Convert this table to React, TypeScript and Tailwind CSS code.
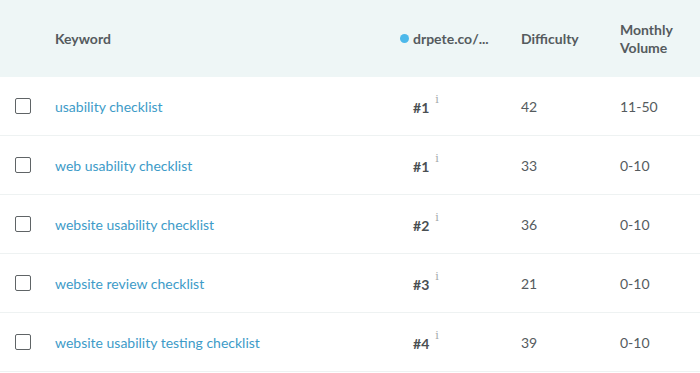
import React from 'react';

type Row = {
  keyword: string;
  rank: number;
  difficulty: number;
  volume: string;
};

const rows: Row[] = [
  { keyword: 'usability checklist', rank: 1, difficulty: 42, volume: '11-50' },
  { keyword: 'web usability checklist', rank: 1, difficulty: 33, volume: '0-10' },
  { keyword: 'website usability checklist', rank: 2, difficulty: 36, volume: '0-10' },
  { keyword: 'website review checklist', rank: 3, difficulty: 21, volume: '0-10' },
  { keyword: 'website usability testing checklist', rank: 4, difficulty: 39, volume: '0-10' },
];

const cols = 'grid grid-cols-[55px_345px_121px_99px_80px] items-center';

const App: React.FC = () => {
  return (
    <div className="w-[700px] h-[373px] overflow-hidden bg-white font-['Lato','Liberation_Sans',sans-serif] text-[14px]">
      <div className={`${cols} h-[77px] bg-[#eef6f6] font-bold text-[#555b5e]`}>
        <div />
        <div>Keyword</div>
        <div className="flex items-center">
          <span className="w-[9px] h-[9px] rounded-full bg-[#4cb8ea] mr-[4px]" />
          <span>drpete.co/...</span>
        </div>
        <div>Difficulty</div>
        <div className="leading-[18px]">
          Monthly
          <br />
          Volume
        </div>
      </div>

      {rows.map((r) => (
        <div key={r.keyword} className={`${cols} h-[59px] border-b border-[#eef2f2] text-[#555b5e]`}>
          <div className="pl-[15px]">
            <div className="w-[16px] h-[16px] rounded-[2px] border border-[#5f6466]" />
          </div>
          <div className="text-[#3d9bc8]">{r.keyword}</div>
          <div className="pl-[13px] flex items-start">
            <span className="font-bold text-[#4a4f52] mt-[3px]">#{r.rank}</span>
            <span className="ml-[6px] text-[11px] leading-[11px] text-[#a3a8aa] font-['DejaVu_Serif',serif]">i</span>
          </div>
          <div>{r.difficulty}</div>
          <div>{r.volume}</div>
        </div>
      ))}
    </div>
  );
};

export default App;
